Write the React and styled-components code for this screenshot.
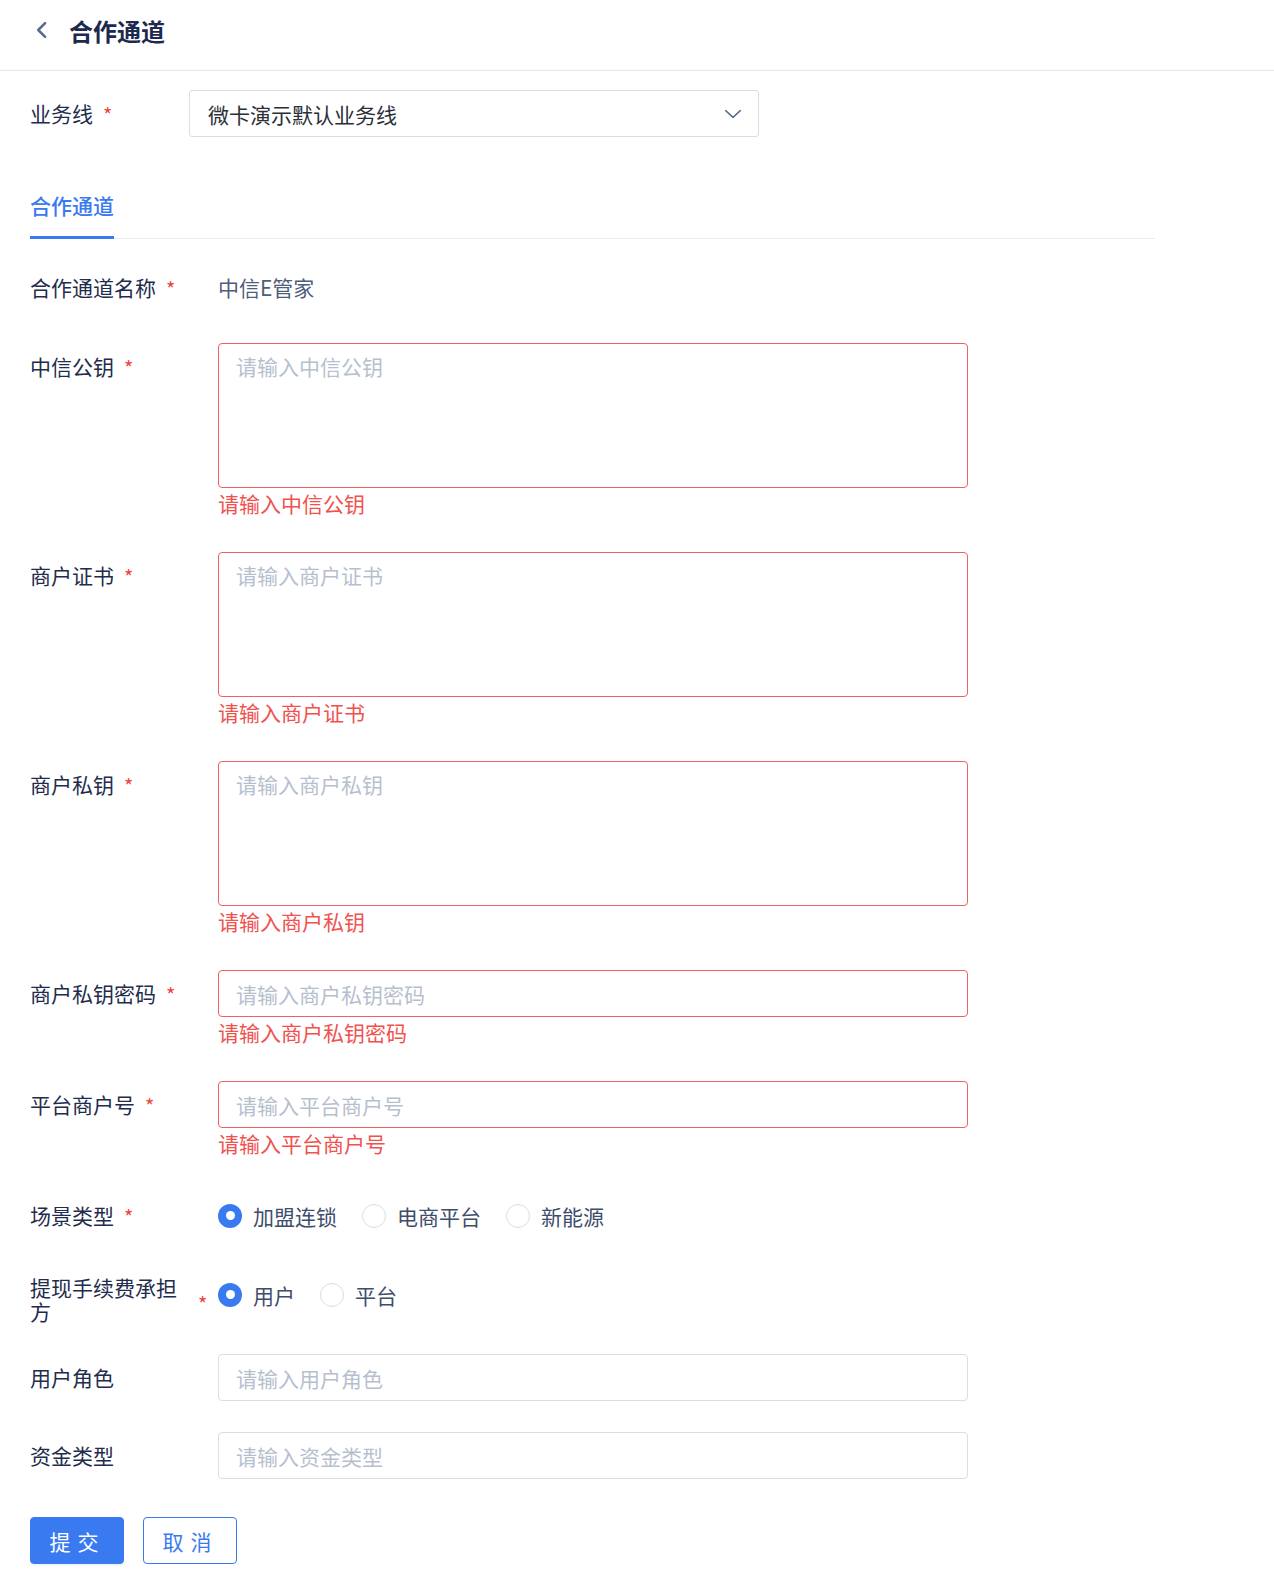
import React, { useState } from 'react';
import styled, { createGlobalStyle } from 'styled-components';

const GlobalStyle = createGlobalStyle`
    body {
        margin: 0;
        background: #ffffff;
        font-family: "Noto Sans CJK SC", "Noto Sans", sans-serif;
        color: #1f2d4d;
    }
    * { box-sizing: border-box; }
`;

const Header = styled.div`
    height: 71px;
    display: flex;
    align-items: center;
    padding: 0 0 10px 30px;
    border-bottom: 1px solid #e3e6ee;
`;

const BackButton = styled.button`
    border: none;
    background: transparent;
    padding: 0;
    width: 24px;
    height: 24px;
    display: flex;
    align-items: center;
    justify-content: center;
    margin-right: 15px;
    cursor: pointer;
`;

const Title = styled.h1`
    margin: 0;
    font-size: 24px;
    font-weight: 700;
    color: #1b2a4e;
`;

const Body = styled.div`
    padding: 19px 119px 30px 30px;
`;

const TopRow = styled.div`
    display: flex;
    align-items: center;
    height: 47px;
`;

const Select = styled.div`
    width: 570px;
    height: 47px;
    margin-left: ${p => p.offset}px;
    border: 1px solid #d9dde5;
    border-radius: 3px;
    display: flex;
    align-items: center;
    justify-content: space-between;
    padding: 0 16px 0 18px;
    font-size: 21px;
    color: #2b2f38;
`;

const TabBar = styled.div`
    display: flex;
    margin-top: 54px;
    border-bottom: 1px solid #e8ebf0;
`;

const Tab = styled.div`
    font-size: 21px;
    font-weight: 500;
    line-height: 28px;
    color: #3a7af0;
    padding-bottom: 17px;
    border-bottom: 3px solid #3a7af0;
    margin-bottom: -1px;
`;

const Form = styled.div`
    margin-top: 25px;
    display: flex;
    flex-direction: column;
    gap: 31px;
`;

const Item = styled.div`
    display: flex;
    align-items: flex-start;
`;

const Label = styled.div`
    width: ${p => p.width || 188}px;
    flex-shrink: 0;
    display: flex;
    align-items: ${p => (p.multi ? 'center' : 'flex-start')};
    font-size: 21px;
    line-height: ${p => (p.multi ? '24px' : '47px')};
    padding-top: ${p => (p.multi ? '4px' : '0')};
    color: #1f2d4d;
`;

const LabelText = styled.span`
    max-width: 158px;
    white-space: ${p => (p.multi ? 'normal' : 'nowrap')};
`;

const Star = styled.span`
    color: #f0433f;
    font-size: 20px;
    margin-left: 10px;
    margin-top: ${p => (p.multi ? '9px' : '1px')};
`;

const Control = styled.div`
    width: 750px;
    display: flex;
    flex-direction: column;
`;

const Value = styled.div`
    font-size: 21px;
    line-height: 46px;
    color: #4f5d7c;
`;

const TextArea = styled.textarea`
    width: 100%;
    height: 145px;
    border: 1px solid ${p => (p.error ? '#f0625f' : '#d9dde5')};
    border-radius: 4px;
    padding: 7px 17px;
    font-family: inherit;
    font-size: 21px;
    line-height: 30px;
    color: #2b2f38;
    resize: none;
    outline: none;
    &::placeholder { color: #b7bfcf; }
`;

const Input = styled.input`
    width: 100%;
    height: 47px;
    border: 1px solid ${p => (p.error ? '#f0625f' : '#d9dde5')};
    border-radius: 4px;
    padding: 0 17px;
    font-family: inherit;
    font-size: 21px;
    color: #2b2f38;
    outline: none;
    &::placeholder { color: #b7bfcf; }
`;

const ErrorText = styled.div`
    font-size: 21px;
    line-height: 30px;
    margin-bottom: 3px;
    color: #f0524f;
`;

const RadioGroup = styled.div`
    display: flex;
    align-items: center;
    height: 47px;
    gap: 25px;
`;

const RadioOption = styled.label`
    display: flex;
    align-items: center;
    gap: 11px;
    font-size: 21px;
    color: #3f4d6d;
    cursor: pointer;
`;

const RadioDot = styled.span`
    width: 24px;
    height: 24px;
    border-radius: 50%;
    border: ${p => (p.checked ? 'none' : '1px solid #d9dde5')};
    background: ${p => (p.checked ? '#3a7af0' : '#fff')};
    display: flex;
    align-items: center;
    justify-content: center;
    &::after {
        content: '';
        display: ${p => (p.checked ? 'block' : 'none')};
        width: 9px;
        height: 9px;
        border-radius: 50%;
        background: #fff;
    }
`;

const Buttons = styled.div`
    display: flex;
    gap: 19px;
    margin-top: 38px;
`;

const Button = styled.button`
    width: 94px;
    height: 47px;
    border-radius: 4px;
    border: 1px solid #3a7af0;
    background: ${p => (p.primary ? '#3a7af0' : '#fff')};
    color: ${p => (p.primary ? '#fff' : '#3a7af0')};
    font-family: inherit;
    font-size: 21px;
    letter-spacing: 7px;
    padding-left: 7px;
    cursor: pointer;
    box-shadow: ${p => (p.primary ? '0 2px 0 rgba(58, 122, 240, 0.08)' : 'none')};
`;

function Chevron({ size = 16, color = '#5a6a8f', down }) {
    return (
        <svg width={size} height={size} viewBox="0 0 16 16" fill="none">
            {down ? (
                <path d="M1.5 5 L8 11 L14.5 5" stroke={color} strokeWidth="1.3" strokeLinecap="round" strokeLinejoin="round" />
            ) : (
                <path d="M10.5 2.5 L5 8 L10.5 13.5" stroke={color} strokeWidth="2" strokeLinecap="round" strokeLinejoin="round" />
            )}
        </svg>
    );
}

function Radio({ options, value, onChange }) {
    return (
        <RadioGroup>
            {options.map(o => (
                <RadioOption key={o} onClick={() => onChange(o)}>
                    <RadioDot checked={value === o} />
                    {o}
                </RadioOption>
            ))}
        </RadioGroup>
    );
}

const textareas = [
    { label: '中信公钥', placeholder: '请输入中信公钥' },
    { label: '商户证书', placeholder: '请输入商户证书' },
    { label: '商户私钥', placeholder: '请输入商户私钥' },
];

const requiredInputs = [
    { label: '商户私钥密码', placeholder: '请输入商户私钥密码' },
    { label: '平台商户号', placeholder: '请输入平台商户号' },
];

export default function App() {
    const [scene, setScene] = useState('加盟连锁');
    const [payer, setPayer] = useState('用户');

    return (
        <>
            <GlobalStyle />
            <Header>
                <BackButton>
                    <Chevron size={20} />
                </BackButton>
                <Title>合作通道</Title>
            </Header>
            <Body>
                <TopRow>
                    <Label width={86}>
                        <LabelText>业务线</LabelText>
                        <Star>*</Star>
                    </Label>
                    <Select offset={73}>
                        <span>微卡演示默认业务线</span>
                        <Chevron size={18} color="#5a6a8f" down />
                    </Select>
                </TopRow>

                <TabBar>
                    <Tab>合作通道</Tab>
                </TabBar>

                <Form>
                    <Item>
                        <Label>
                            <LabelText>合作通道名称</LabelText>
                            <Star>*</Star>
                        </Label>
                        <Value>中信E管家</Value>
                    </Item>

                    {textareas.map(t => (
                        <Item key={t.label}>
                            <Label>
                                <LabelText>{t.label}</LabelText>
                                <Star>*</Star>
                            </Label>
                            <Control>
                                <TextArea error placeholder={t.placeholder} />
                                <ErrorText>{t.placeholder}</ErrorText>
                            </Control>
                        </Item>
                    ))}

                    {requiredInputs.map(t => (
                        <Item key={t.label}>
                            <Label>
                                <LabelText>{t.label}</LabelText>
                                <Star>*</Star>
                            </Label>
                            <Control>
                                <Input error placeholder={t.placeholder} />
                                <ErrorText>{t.placeholder}</ErrorText>
                            </Control>
                        </Item>
                    ))}

                    <Item>
                        <Label>
                            <LabelText>场景类型</LabelText>
                            <Star>*</Star>
                        </Label>
                        <Radio options={['加盟连锁', '电商平台', '新能源']} value={scene} onChange={setScene} />
                    </Item>

                    <Item>
                        <Label multi>
                            <LabelText multi>提现手续费承担方</LabelText>
                            <Star multi>*</Star>
                        </Label>
                        <Radio options={['用户', '平台']} value={payer} onChange={setPayer} />
                    </Item>

                    <Item>
                        <Label>
                            <LabelText>用户角色</LabelText>
                        </Label>
                        <Control>
                            <Input placeholder="请输入用户角色" />
                        </Control>
                    </Item>

                    <Item>
                        <Label>
                            <LabelText>资金类型</LabelText>
                        </Label>
                        <Control>
                            <Input placeholder="请输入资金类型" />
                        </Control>
                    </Item>
                </Form>

                <Buttons>
                    <Button primary>提交</Button>
                    <Button>取消</Button>
                </Buttons>
            </Body>
        </>
    );
}
